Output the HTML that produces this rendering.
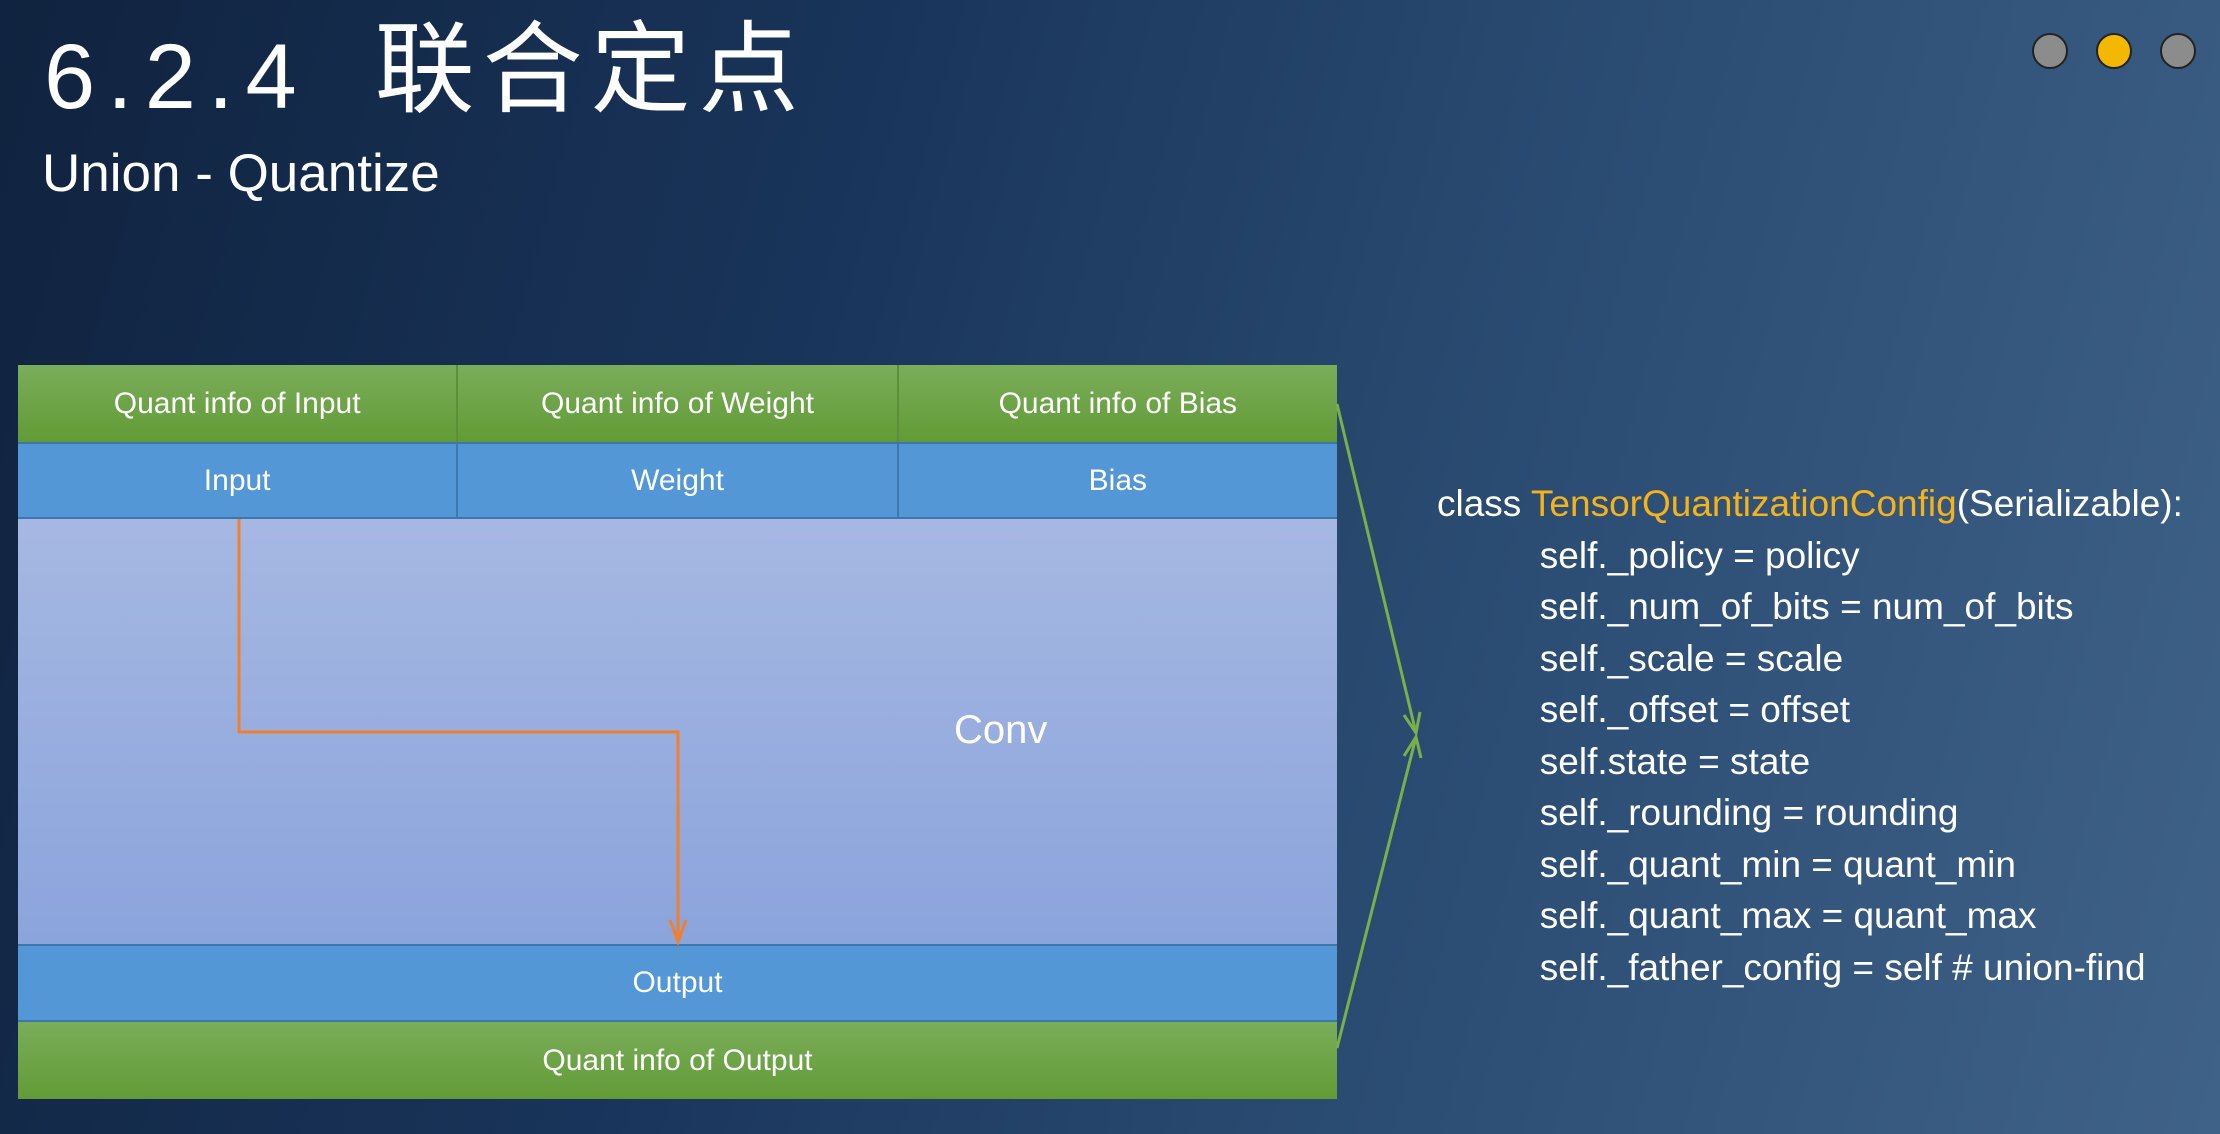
<!DOCTYPE html>
<html><head><meta charset="utf-8"><style>
html,body{margin:0;padding:0}
body{width:2220px;height:1134px;overflow:hidden;position:relative;
background:linear-gradient(105deg,#10233f 0%,#19345a 35%,#2b4c72 65%,#3f6288 100%);
font-family:"Liberation Sans","Noto Sans CJK SC",sans-serif;color:#fff}
.t{position:absolute;left:44px;top:24px;font-size:92px;line-height:1;white-space:nowrap}
.t .n{letter-spacing:12px}
.t .c{margin-left:66px;font-size:100px;letter-spacing:8px;position:relative;top:-4px}
.s{position:absolute;left:42px;top:147px;font-size:53px;line-height:1}
.dot{position:absolute;top:33px;width:36px;height:36px;border-radius:50%;border:2px solid #222;box-sizing:border-box}
.row{position:absolute;left:18px;width:1319px;display:flex}
.row div{flex:1;text-align:center;font-size:30px;border-right:2px solid #3f78b0;box-sizing:border-box;display:flex;align-items:center;justify-content:center}
.row div:last-child{border-right:none}
.g{background:linear-gradient(#7aad5a,#629b36)}
.g div{border-right-color:#5c8f38}
.b{background:#5397d6;border-top:2px solid #3b76ad;border-bottom:2px solid #3b76ad;box-sizing:border-box}
.code{position:absolute;left:1437px;top:478px;font-size:37px;line-height:51.5px;white-space:pre}
</style></head><body>
<div class="t"><span class="n">6.2.4</span><span class="c">联合定点</span></div>
<div class="s">Union - Quantize</div>
<div class="dot" style="left:2032px;background:#8c8c8c"></div>
<div class="dot" style="left:2096px;background:#f5b800"></div>
<div class="dot" style="left:2160px;background:#8c8c8c"></div>

<div class="row g" style="top:365px;height:77px"><div>Quant info of Input</div><div>Quant info of Weight</div><div>Quant info of Bias</div></div>
<div class="row b" style="top:442px;height:77px"><div>Input</div><div>Weight</div><div>Bias</div></div>
<div style="position:absolute;left:18px;top:519px;width:1319px;height:425px;background:linear-gradient(#a6b8e2,#8ba4dc)"></div>
<div style="position:absolute;left:954px;top:710px;font-size:40px;line-height:1">Conv</div>
<div class="row b" style="top:944px;height:78px"><div>Output</div></div>
<div class="row g" style="top:1022px;height:77px"><div>Quant info of Output</div></div>

<svg style="position:absolute;left:0;top:0" width="2220" height="1134">
<polyline points="239,519 239,732 678,732 678,940" fill="none" stroke="#ee8030" stroke-width="3"/>
<polyline points="670,920 678,942 686,920" fill="none" stroke="#ee8030" stroke-width="3"/>
<line x1="1337" y1="404" x2="1416" y2="733" stroke="#7ab04a" stroke-width="3"/>
<line x1="1337" y1="1048" x2="1416" y2="737" stroke="#7ab04a" stroke-width="3"/>
<polyline points="1404,715 1416,733 1420,712" fill="none" stroke="#7ab04a" stroke-width="3"/>
<polyline points="1404,756 1416,737 1421,758" fill="none" stroke="#7ab04a" stroke-width="3"/>
</svg>

<div class="code">class <span style="color:#f5b21a">TensorQuantizationConfig</span>(Serializable):
          self._policy = policy
          self._num_of_bits = num_of_bits
          self._scale = scale
          self._offset = offset
          self.state = state
          self._rounding = rounding
          self._quant_min = quant_min
          self._quant_max = quant_max
          self._father_config = self # union-find</div>
</body></html>
